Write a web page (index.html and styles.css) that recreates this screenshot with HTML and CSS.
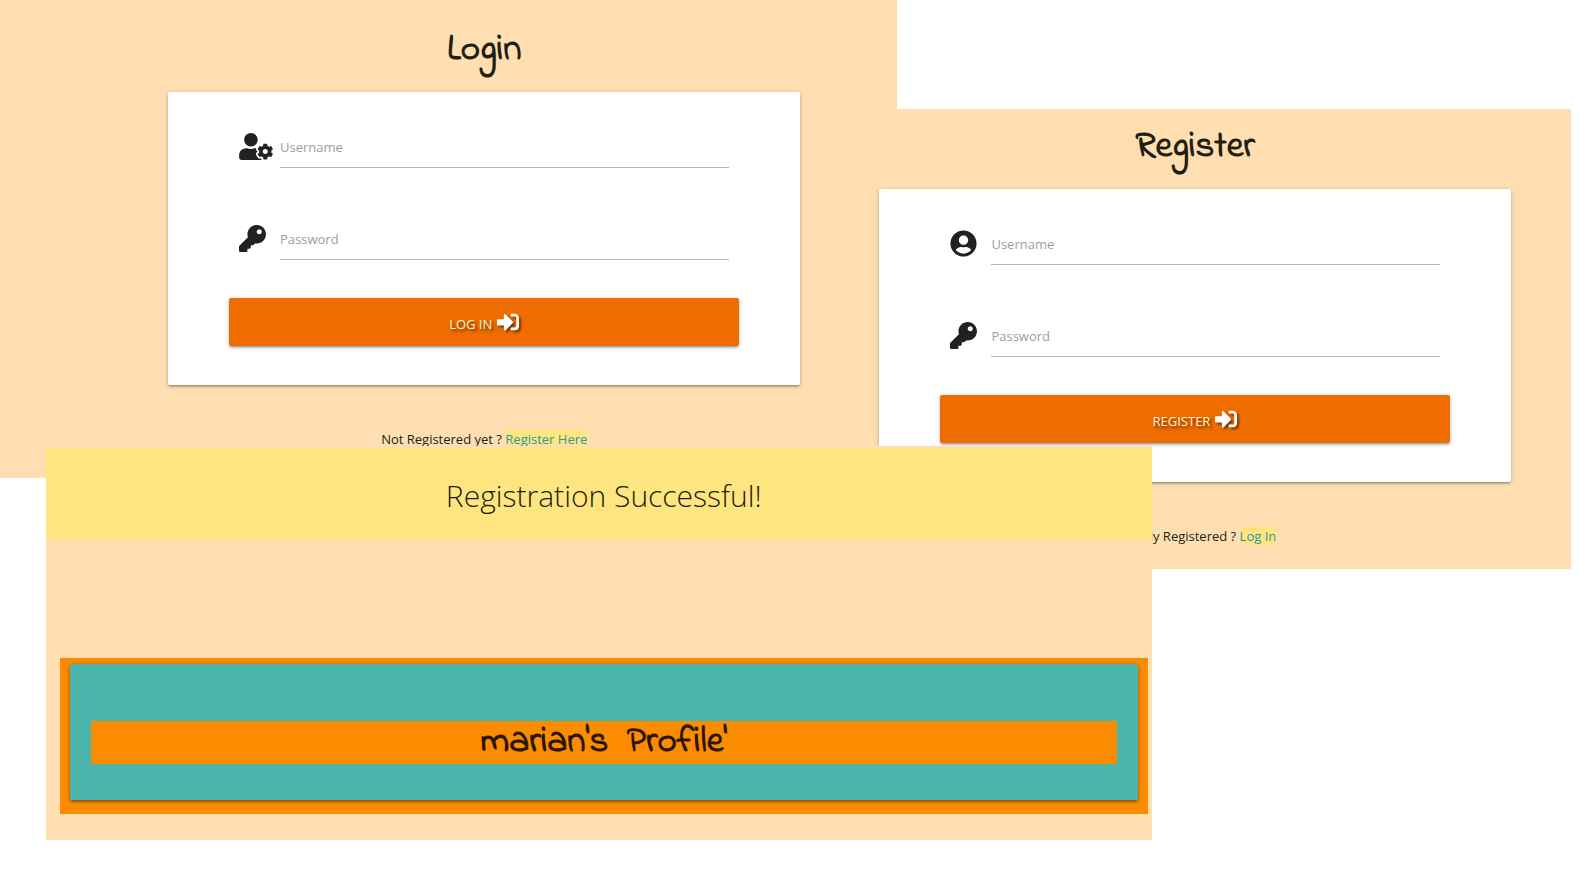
FILE: index.html
```
<!DOCTYPE html>
<html lang="en">
<head>
<meta charset="utf-8">
<title>Login, Register and Profile</title>
<link rel="stylesheet" href="styles.css">
</head>
<body>
<svg class="sprite" aria-hidden="true">
  <symbol id="user-cog" viewBox="0 0 640 512"><path d="M610.5 373.3c2.6-14.1 2.6-28.5 0-42.6l25.8-14.9c3-1.7 4.3-5.2 3.3-8.5-6.7-21.6-18.2-41.2-33.2-57.4-2.3-2.5-6-3.1-9-1.4l-25.8 14.9c-10.9-9.3-23.4-16.5-36.9-21.3v-29.8c0-3.4-2.4-6.4-5.7-7.1-22.3-5-45-4.8-66.2 0-3.3.7-5.7 3.7-5.7 7.1v29.8c-13.5 4.8-26 12-36.9 21.3l-25.8-14.9c-2.9-1.7-6.7-1.1-9 1.4-15 16.2-26.5 35.8-33.2 57.4-1 3.3.4 6.8 3.3 8.5l25.8 14.9c-2.6 14.1-2.6 28.5 0 42.6l-25.8 14.9c-3 1.7-4.3 5.2-3.3 8.5 6.7 21.6 18.2 41.1 33.2 57.4 2.3 2.5 6 3.1 9 1.4l25.8-14.9c10.9 9.3 23.4 16.5 36.9 21.3v29.8c0 3.4 2.4 6.4 5.7 7.1 22.3 5 45 4.8 66.2 0 3.3-.7 5.7-3.7 5.7-7.1v-29.8c13.5-4.8 26-12 36.9-21.3l25.8 14.9c2.9 1.7 6.7 1.1 9-1.4 15-16.2 26.5-35.8 33.2-57.4 1-3.3-.4-6.8-3.3-8.5l-25.8-14.9zM496 400.5c-26.8 0-48.5-21.8-48.5-48.5s21.8-48.5 48.5-48.5 48.5 21.8 48.5 48.5-21.7 48.5-48.5 48.5zM224 256c70.7 0 128-57.3 128-128S294.7 0 224 0 96 57.3 96 128s57.3 128 128 128zm201.2 226.5c-2.3-1.2-4.6-2.6-6.8-3.9l-7.9 4.6c-6 3.4-12.8 5.3-19.6 5.3-10.9 0-21.4-4.6-28.9-12.6-18.3-19.8-32.3-43.9-40.2-69.6-5.5-17.7 1.9-36.4 17.9-45.7l7.9-4.6c-.1-2.6-.1-5.2 0-7.8l-7.9-4.6c-16-9.2-23.4-28-17.9-45.7.9-2.9 2.2-5.8 3.2-8.7-3.8-.3-7.5-1.2-11.4-1.2h-16.7c-22.2 10.2-46.9 16-72.9 16s-50.6-5.8-72.9-16h-16.7C60.2 288 0 348.2 0 422.4V464c0 26.5 21.5 48 48 48h352c10.1 0 19.5-3.2 27.2-8.5-1.2-3.8-2-7.7-2-11.8v-9.2z"/></symbol>
  <symbol id="key" viewBox="0 0 512 512"><path d="M512 176.001C512 273.203 433.202 352 336 352c-11.22 0-22.19-1.062-32.827-3.069l-24.012 27.014A23.999 23.999 0 0 1 261.223 384H224v40c0 13.255-10.745 24-24 24h-40v40c0 13.255-10.745 24-24 24H24c-13.255 0-24-10.745-24-24v-78.059c0-6.365 2.529-12.47 7.029-16.971l161.802-161.802C163.108 213.814 160 195.271 160 176 160 78.798 238.797.001 335.999 0 433.488-.001 512 78.511 512 176.001zM336 128c0 26.51 21.49 48 48 48s48-21.49 48-48-21.49-48-48-48-48 21.49-48 48z"/></symbol>
  <symbol id="user-circle" viewBox="0 0 496 512"><path d="M248 8C111 8 0 119 0 256s111 248 248 248 248-111 248-248S385 8 248 8zm0 96c48.6 0 88 39.4 88 88s-39.4 88-88 88-88-39.4-88-88 39.4-88 88-88zm0 344c-58.7 0-111.3-26.6-146.5-68.2 18.8-35.4 55.6-59.8 98.5-59.8 2.4 0 4.8.4 7.1 1.1 13 4.2 26.6 6.9 40.9 6.9 14.3 0 28-2.7 40.9-6.9 2.3-.7 4.7-1.1 7.1-1.1 42.9 0 79.7 24.4 98.5 59.8C359.3 421.4 306.7 448 248 448z"/></symbol>
  <symbol id="sign-in" viewBox="0 0 512 512"><path d="M416 448h-84c-6.6 0-12-5.4-12-12v-40c0-6.6 5.4-12 12-12h84c17.7 0 32-14.3 32-32V160c0-17.7-14.3-32-32-32h-84c-6.6 0-12-5.4-12-12V76c0-6.6 5.4-12 12-12h84c53 0 96 43 96 96v192c0 53-43 96-96 96zm-47-201L201 79c-15-15-41-4.5-41 17v96H24c-13.3 0-24 10.7-24 24v96c0 13.3 10.7 24 24 24h136v96c0 21.5 26 32 41 17l168-168c9.3-9.4 9.3-24.6 0-34z"/></symbol>
</svg>
<main class="canvas">
  <section class="window window-login" id="login">
    <h1 class="title">Login</h1>
    <form class="card">
      <div class="field">
        <svg class="icon icon-wide"><use href="#user-cog"/></svg>
        <label for="login-user">Username</label>
        <input id="login-user" type="text">
      </div>
      <div class="field">
        <svg class="icon"><use href="#key"/></svg>
        <label for="login-pass">Password</label>
        <input id="login-pass" type="password">
      </div>
      <button class="submit" type="submit"><span class="submit-text">LOG IN</span><svg class="submit-icon"><use href="#sign-in"/></svg></button>
    </form>
    <p class="note">Not Registered yet ? <a href="#register">Register Here</a></p>
  </section>

  <section class="window window-register" id="register">
    <h1 class="title">Register</h1>
    <form class="card">
      <div class="field">
        <svg class="icon"><use href="#user-circle"/></svg>
        <label for="reg-user">Username</label>
        <input id="reg-user" type="text">
      </div>
      <div class="field">
        <svg class="icon"><use href="#key"/></svg>
        <label for="reg-pass">Password</label>
        <input id="reg-pass" type="password">
      </div>
      <button class="submit" type="submit"><span class="submit-text">REGISTER</span><svg class="submit-icon"><use href="#sign-in"/></svg></button>
    </form>
    <p class="note">Already Registered ? <a href="#login">Log In</a></p>
  </section>

  <section class="window window-profile">
    <h2 class="flash">Registration Successful!</h2>
    <div class="profile">
      <div class="panel">
        <h2 class="profile-name">marian's &nbsp;Profile'</h2>
      </div>
    </div>
  </section>
</main>
</body>
</html>
```
FILE: styles.css
```
* {
  box-sizing: border-box;
}

body {
  margin: 0;
  background: #fff;
  color: #221f12;
  font: 13px/20px "Segoe UI", "Open Sans", "Noto Sans", sans-serif;
}

.sprite {
  display: none;
}

.canvas {
  position: relative;
  min-height: 100vh;
  overflow: hidden;
}

.window {
  position: absolute;
  background: #ffdfb2;
}

.window-login {
  top: 0;
  left: 0;
  width: 56.8%;
  padding: 20px 97px 29px 168px;
}

.window-register {
  top: 109px;
  left: 51.8%;
  width: 47.6%;
  padding: 8px 60px 23px 61px;
}

.window-profile {
  top: 446px;
  left: 2.9%;
  width: 70%;
  padding: 2px 0 26px;
}

.title,
.profile-name {
  margin: 0;
  font-family: "Indie Flower", cursive;
  font-size: 37px;
  font-weight: 700;
  font-kerning: none;
  font-variant-ligatures: none;
  text-align: center;
}

.title {
  margin-bottom: 12px;
  line-height: 60px;
}

.card {
  display: flex;
  flex-direction: column;
  padding: 32px 61px 39px;
  background: #fff;
  border-radius: 2px;
  box-shadow: 0 2px 2px rgba(0, 0, 0, .14), 0 3px 1px -2px rgba(0, 0, 0, .12), 0 1px 5px rgba(0, 0, 0, .2);
}

.field {
  display: grid;
  grid-template-columns: 41px 1fr;
  align-items: center;
  height: 44px;
  margin: 0 10px 48px;
}

.field + .field {
  margin-bottom: 38px;
}

.icon {
  width: 27px;
  height: 27px;
  fill: #212121;
}

.icon-wide {
  width: 34px;
}

.field label,
.field input {
  grid-area: 1 / 2;
}

.field label {
  padding-top: 2px;
  color: #9e9e9e;
  pointer-events: none;
}

.field input {
  width: 100%;
  height: 44px;
  padding: 0;
  border: 0;
  border-bottom: 1px solid #b4b4b4;
  background: none;
  font: inherit;
  outline: none;
}

.submit {
  display: flex;
  align-items: center;
  justify-content: center;
  gap: 5px;
  height: 48px;
  padding: 0;
  border: 0;
  border-radius: 2px;
  background: #ef6c00;
  box-shadow: 0 2px 2px rgba(0, 0, 0, .14), 0 3px 1px -2px rgba(0, 0, 0, .12), 0 1px 5px rgba(0, 0, 0, .2);
  color: #fff3d6;
  font: inherit;
  font-weight: 500;
  text-shadow: 2px 2px 3px rgba(0, 0, 0, .6);
}

.submit-text {
  padding-top: 3px;
}

.submit-icon {
  width: 22px;
  height: 22px;
  fill: #fff;
  filter: drop-shadow(2px 2px 1px rgba(0, 0, 0, .5));
}

.note {
  margin: 44px 0 0;
  text-align: center;
}

.note a {
  background: #ffe57f;
  color: #2b98a8;
  text-decoration: none;
}

.flash {
  margin: 0 0 119px;
  padding: 26px 0 22px 10px;
  background: #ffe57f;
  font-size: 30px;
  font-weight: 300;
  line-height: 43px;
  text-align: center;
}

.profile {
  margin: 0 4px 0 14px;
  padding: 6px 10px 14px;
  background: #fb8c00;
}

.panel {
  padding: 57px 21px 36px;
  background: #4db6ac;
  border-radius: 2px;
  box-shadow: 0 2px 2px rgba(0, 0, 0, .24), 0 1px 5px rgba(0, 0, 0, .3);
}

.profile-name {
  background: #fb8c00;
  color: #2b1500;
  line-height: 43px;
}
```
